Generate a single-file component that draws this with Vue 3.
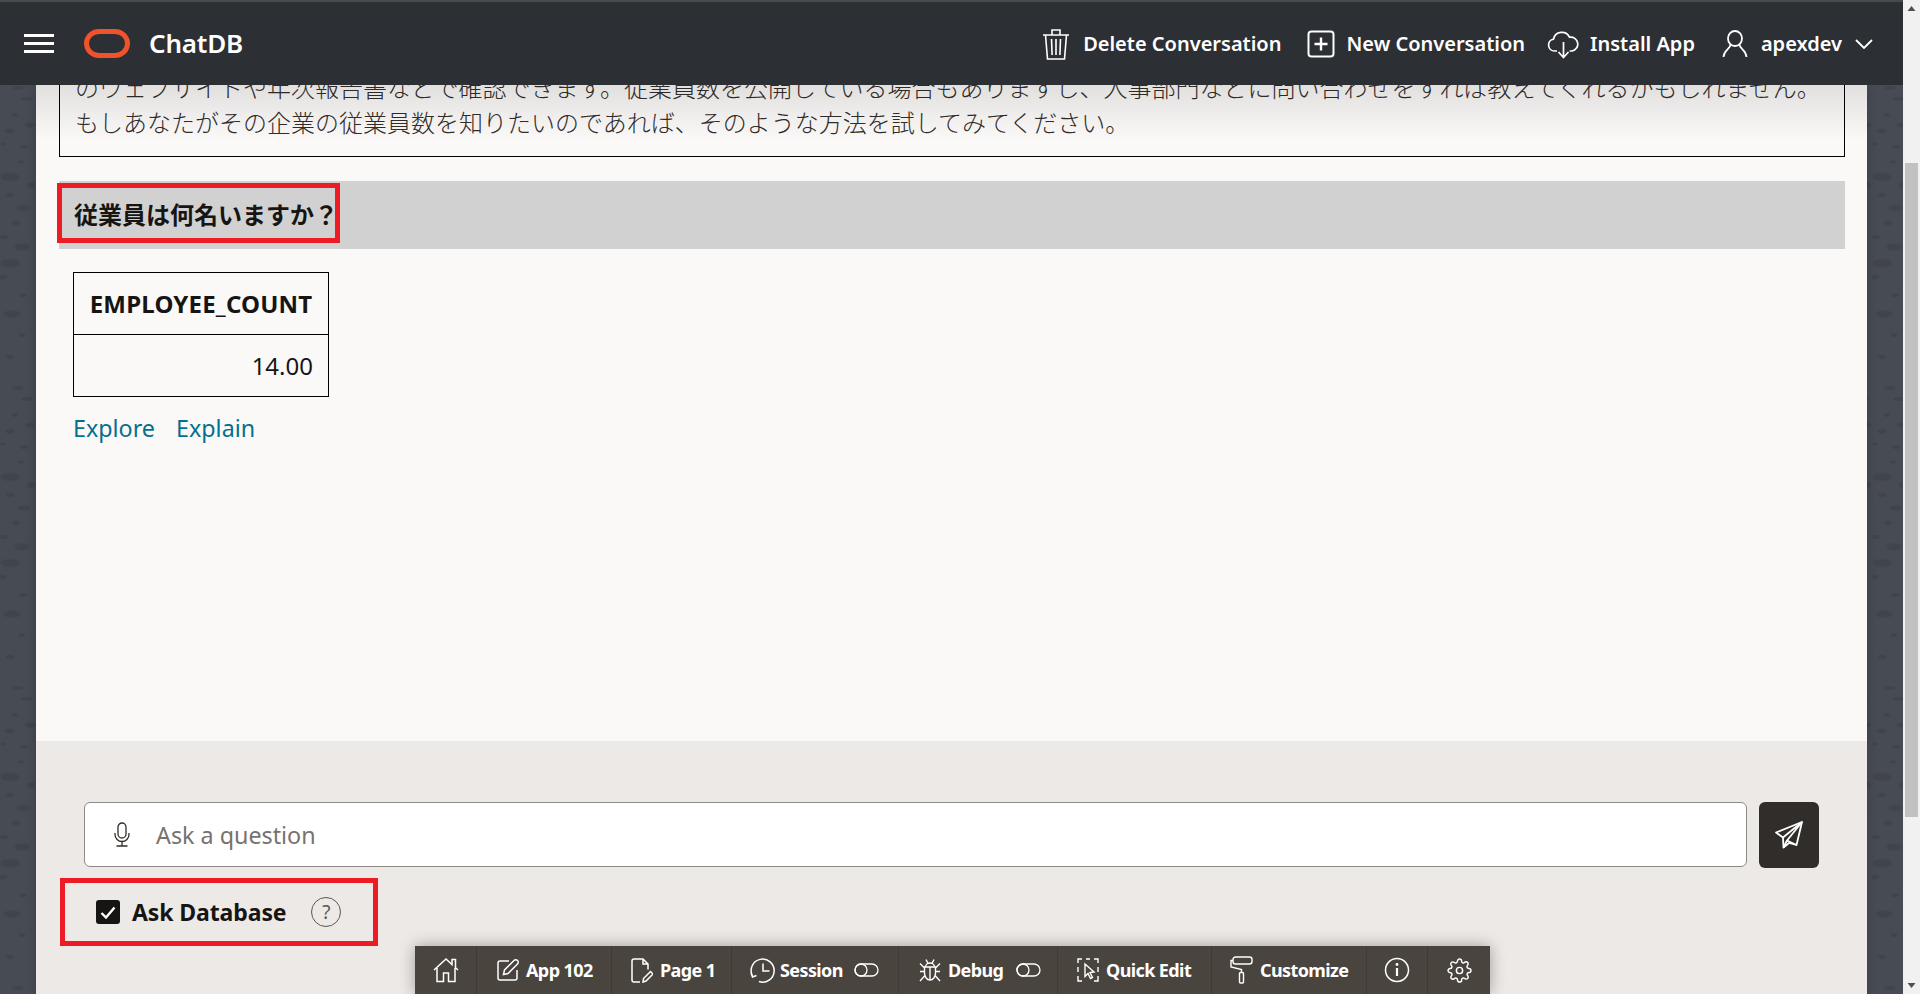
<script setup>
const lineOne = 'のウェブサイトや年次報告書などで確認できます。従業員数を公開している場合もありますし、人事部門などに問い合わせをすれば教えてくれるかもしれません。'
const lineTwo = 'もしあなたがその企業の従業員数を知りたいのであれば、そのような方法を試してみてください。'
</script>

<template>
  <div class="page">
    <div class="stage">
      <header class="topbar">
        <div class="burger"><span></span><span></span><span></span></div>
        <span class="logo"></span>
        <span class="brand">ChatDB</span>
        <nav class="actions">
          <a class="action trash">
            <svg width="28" height="32" viewBox="0 0 28 32" fill="none" stroke="#fff" stroke-width="1.6"><path d="M1 7h26M10 7V2h8v5M3.500 7l2 24h17l2-24M9.500 11l.6 16M14 11v16M18.500 11l-.6 16"/></svg>
            <span>Delete Conversation</span>
          </a>
          <a class="action new">
            <svg width="28" height="28" viewBox="0 0 28 28" fill="none" stroke="#fff" stroke-width="2"><rect x="1.500" y="1.500" width="25" height="25" rx="3"/><path d="M14 7.500v13M7.500 14h13" stroke-width="2.400"/></svg>
            <span>New Conversation</span>
          </a>
          <a class="action cloud">
            <svg width="32" height="30" viewBox="0 0 32 30" fill="none" stroke="#fff" stroke-width="1.700"><path d="M10 22H7.500A6 6 0 0 1 6.500 10.100 8.500 8.500 0 0 1 22.500 8.200 7 7 0 0 1 25 22h-2.500"/><path d="M16.500 13v15M11.500 23l5 5.500 5-5.500"/></svg>
            <span>Install App</span>
          </a>
          <a class="action user">
            <svg width="26" height="28" viewBox="0 0 26 28" fill="none" stroke="#fff" stroke-width="1.800"><ellipse cx="13" cy="8.500" rx="7" ry="7.500"/><path d="M8.500 14.500C8.500 19 2 19.500 1.500 27M17.500 14.500C17.500 19 24 19.500 24.500 27"/></svg>
            <span>apexdev</span>
            <svg class="chev" width="18" height="10" viewBox="0 0 18 10" fill="none" stroke="#fff" stroke-width="1.800"><path d="M1 1l8 8 8-8"/></svg>
          </a>
        </nav>
      </header>

      <main class="sheet">
        <section class="conversation">
          <div class="answer">
            <p>{{ lineOne }}</p>
            <p>{{ lineTwo }}</p>
          </div>
          <div class="question">
            <span class="flagged-q">従業員は何名いますか？</span>
          </div>
          <table class="result">
            <thead><tr><th>EMPLOYEE_COUNT</th></tr></thead>
            <tbody><tr><td>14.00</td></tr></tbody>
          </table>
          <div class="links"><a>Explore</a><a>Explain</a></div>
        </section>

        <section class="composer">
          <div class="ask-row">
            <div class="field">
              <svg width="16" height="25" viewBox="0 0 16 25" fill="none" stroke="#312d2a" stroke-width="1.300"><rect x="4" y="1" width="8" height="15" rx="4"/><path d="M1 11v1.500a7 7 0 0 0 14 0V11M8 19.500V24M2.500 24h11"/></svg>
              <span class="placeholder">Ask a question</span>
            </div>
            <button class="send" type="button">
              <svg width="28" height="28" viewBox="0 0 28 28" fill="none" stroke="#fff" stroke-width="1.800" stroke-linejoin="round"><path d="M27 1L1 11.500l7 5 .5 10 5.500-4.500 7.500 2z"/><path d="M27 1L8 16.500M27 1L12 19.500l-3.500 7M12 19.500l9.500 4.500"/></svg>
            </button>
          </div>
          <label class="flagged-ask">
            <span class="check">
              <svg width="16" height="13" viewBox="0 0 16 13" fill="none" stroke="#fff" stroke-width="2.400"><path d="M1.500 7l4.500 4.500L14.500 1.500"/></svg>
            </span>
            <span class="ask-label">Ask Database</span>
            <span class="help">?</span>
          </label>
        </section>
      </main>

      <div class="devbar">
        <a class="dev home">
          <svg width="26" height="26" viewBox="0 0 26 26" fill="none" stroke="#fff" stroke-width="1.500"><path d="M1 13L13 2l6 5.500V2.500h3.500v8.200L25 13M4 11v13.500h6.500V16h5v8.500H22V11"/></svg>
        </a>
        <a class="dev app">
          <svg width="22" height="22" viewBox="0 0 22 22" fill="none" stroke="#fff" stroke-width="1.500"><path d="M12 2H3a2 2 0 0 0-2 2v15a2 2 0 0 0 2 2h15a2 2 0 0 0 2-2v-8"/><path d="M6.500 15.500l1-4.500L17 1.500a2 2 0 0 1 3.500 3.500L11 14.500z"/></svg>
          <span>App 102</span>
        </a>
        <a class="dev pg">
          <svg width="22" height="25" viewBox="0 0 22 25" fill="none" stroke="#fff" stroke-width="1.500"><path d="M9 24H3a2 2 0 0 1-2-2V3a2 2 0 0 1 2-2h9l5 5v5.500M12 1v5h5"/><path d="M12 24l.5-3.500 7-7 2.500 2.500-7 7z"/></svg>
          <span>Page 1</span>
        </a>
        <a class="dev session">
          <svg width="25" height="25" viewBox="0 0 25 25" fill="none" stroke="#fff" stroke-width="1.500"><path d="M2.500 18A11.500 11.500 0 1 1 9 23.500M13 5.500V13h6.500M1 15l1.500 4 4-1.500"/></svg>
          <span>Session</span>
          <svg class="toggle" width="25" height="14" viewBox="0 0 25 14" fill="none" stroke="#fff" stroke-width="1.300"><rect x="1" y="1" width="23" height="12" rx="6"/><circle cx="7" cy="7" r="6"/></svg>
        </a>
        <a class="dev debug">
          <svg width="22" height="24" viewBox="0 0 22 24" fill="none" stroke="#fff" stroke-width="1.400"><path d="M7 1.500l2 4M15 1.500l-2 4M6.500 9a4.500 4 0 0 1 9 0M5.500 9h11v6a5.500 7 0 0 1-11 0zM11 9v13M1 5.500L5.500 10M21 5.500L16.500 10M1 13.500h4.500M21 13.500h-4.500M1 23l4.500-5M21 23l-4.500-5"/></svg>
          <span>Debug</span>
          <svg class="toggle" width="25" height="14" viewBox="0 0 25 14" fill="none" stroke="#fff" stroke-width="1.300"><rect x="1" y="1" width="23" height="12" rx="6"/><circle cx="7" cy="7" r="6"/></svg>
        </a>
        <a class="dev quick">
          <svg width="22" height="24" viewBox="0 0 22 24" fill="none" stroke="#fff" stroke-width="1.400"><path d="M1 5V1h4M9 1h4M17 1h4v4M1 9v5M21 9v5M1 18v5h4M17 23h4v-5"/><path d="M8 6l9 8-4 .5 2.500 5-2 1L11 15.500 8 18.500z"/></svg>
          <span>Quick Edit</span>
        </a>
        <a class="dev custom">
          <svg width="23" height="28" viewBox="0 0 23 28" fill="none" stroke="#fff" stroke-width="1.400"><rect x="3" y="1" width="19" height="7" rx="2.500"/><path d="M3 4.500H1v6.500l10.500 2.500v3"/><rect x="9.500" y="16.500" width="4" height="10.500" rx="1"/></svg>
          <span>Customize</span>
        </a>
        <a class="dev info">
          <svg width="26" height="26" viewBox="0 0 26 26" fill="none" stroke="#fff" stroke-width="1.500"><circle cx="13" cy="13" r="11.500"/><path d="M13 11v8" stroke-width="2.200"/><circle cx="13" cy="7.500" r="1.400" fill="#fff" stroke="none"/></svg>
        </a>
        <a class="dev gear">
          <svg width="25" height="25" viewBox="0 0 24 24" fill="none" stroke="#fff" stroke-width="1.400"><path d="M12 15a3 3 0 1 0 0-6 3 3 0 0 0 0 6z"/><path d="M19.400 15a1.650 1.650 0 0 0 .33 1.820l.06.06a2 2 0 0 1 0 2.830 2 2 0 0 1-2.830 0l-.06-.06a1.650 1.650 0 0 0-1.820-.33 1.650 1.650 0 0 0-1 1.510V21a2 2 0 0 1-2 2 2 2 0 0 1-2-2v-.09A1.650 1.650 0 0 0 9 19.400a1.650 1.650 0 0 0-1.820.33l-.06.06a2 2 0 0 1-2.830 0 2 2 0 0 1 0-2.830l.06-.06a1.650 1.650 0 0 0 .33-1.820 1.650 1.650 0 0 0-1.510-1H3a2 2 0 0 1-2-2 2 2 0 0 1 2-2h.09A1.650 1.650 0 0 0 4.600 9a1.650 1.650 0 0 0-.33-1.820l-.06-.06a2 2 0 0 1 0-2.830 2 2 0 0 1 2.830 0l.06.06a1.650 1.650 0 0 0 1.820.33H9a1.650 1.650 0 0 0 1-1.510V3a2 2 0 0 1 2-2 2 2 0 0 1 2 2v.09a1.650 1.650 0 0 0 1 1.510 1.650 1.650 0 0 0 1.820-.33l.06-.06a2 2 0 0 1 2.830 0 2 2 0 0 1 0 2.830l-.06.06a1.650 1.650 0 0 0-.33 1.820V9a1.650 1.650 0 0 0 1.510 1H21a2 2 0 0 1 2 2 2 2 0 0 1-2 2h-.09a1.650 1.650 0 0 0-1.510 1z"/></svg>
        </a>
      </div>
    </div>

    <aside class="scrollbar">
      <svg class="arrow" width="17" height="17" viewBox="0 0 17 17"><path d="M8.500 6L4.500 11h8z" fill="#505050"/></svg>
      <div class="track"><div class="thumb"></div></div>
      <svg class="arrow" width="17" height="17" viewBox="0 0 17 17"><path d="M8.500 11L4.500 6h8z" fill="#505050"/></svg>
    </aside>
  </div>
</template>

<style>
html, body { margin: 0; height: 100%; overflow: hidden; }
</style>

<style scoped>
.page {
  display: grid;
  grid-template-columns: 1fr 17px;
  height: 100vh;
  font-family: "Noto Sans", "Noto Sans CJK JP", sans-serif;
  color: #161513;
}
.stage {
  position: relative;
  display: flex;
  flex-direction: column;
  min-width: 0;
  overflow: hidden;
  background-color: #474b53;
  background-image:
    radial-gradient(ellipse 7px 2.500px at 18px 3px, #40444b 60%, transparent),
    radial-gradient(ellipse 7px 2.500px at 27px 14px, #40444b 60%, transparent),
    radial-gradient(ellipse 4px 2.500px at 15px 30px, #40444b 60%, transparent),
    radial-gradient(ellipse 6px 3px at 30px 40px, #40444b 60%, transparent),
    radial-gradient(ellipse 6px 3px at 10px 46px, #40444b 60%, transparent),
    radial-gradient(ellipse 3px 2px at 3px 59px, #40444b 60%, transparent),
    radial-gradient(ellipse 5px 2.500px at 24px 62px, #40444b 60%, transparent),
    radial-gradient(ellipse 4px 2px at 21px 77px, #40444b 60%, transparent),
    radial-gradient(ellipse 11px 5px at 10px 92px, #40444b 65%, transparent),
    radial-gradient(ellipse 5px 3.500px at 31px 100px, #40444b 60%, transparent),
    radial-gradient(ellipse 5px 2.500px at 10px 110px, #40444b 60%, transparent),
    radial-gradient(ellipse 8px 3.500px at 24px 123px, #40444b 60%, transparent),
    radial-gradient(ellipse 5px 3px at 16px 138px, #40444b 60%, transparent),
    radial-gradient(ellipse 5px 2.500px at 4px 152px, #40444b 60%, transparent),
    radial-gradient(ellipse 9px 4.500px at 22px 162px, #40444b 65%, transparent),
    radial-gradient(ellipse 11px 5px at 10px 178px, #40444b 65%, transparent),
    radial-gradient(ellipse 5px 3px at 3px 192px, #40444b 60%, transparent),
    radial-gradient(ellipse 5px 2.500px at 23px 210px, #40444b 60%, transparent),
    radial-gradient(ellipse 10px 4.500px at 12px 229px, #40444b 65%, transparent),
    radial-gradient(ellipse 4px 2.500px at 22px 250px, #40444b 60%, transparent),
    radial-gradient(ellipse 5px 2.500px at 10px 272px, #40444b 60%, transparent);
  background-size: 36px 300px;
  background-position: 0 85px;
}

.topbar {
  display: flex;
  align-items: center;
  flex: none;
  height: 83px;
  border-top: 2px solid #4a4a4a;
  background: #2c2f34;
  color: #fff;
  padding-left: 24px;
  position: relative;
  z-index: 2;
}
.burger { display: flex; flex-direction: column; gap: 5px; width: 30px; margin-top: -1px; }
.burger span { height: 3px; background: #fff; }
.logo {
  width: 46px;
  height: 29px;
  margin-left: 30px;
  box-sizing: border-box;
  border: 5px solid #f0522c;
  border-radius: 15px / 14.500px;
}
.brand { margin-left: 19px; margin-top: -2px; font-size: 26px; font-weight: 600; letter-spacing: -0.2px; }
.actions { display: flex; align-items: center; margin-left: auto; margin-right: 30px; }
.action { display: flex; align-items: center; gap: 13px; font-size: 20px; font-weight: 600; letter-spacing: 0; }
.new { margin-left: 26px; gap: 11px; }
.cloud { margin-left: 22px; gap: 11px; }
.user { margin-left: 27px; }

.sheet {
  flex: 1;
  min-height: 0;
  display: flex;
  flex-direction: column;
  margin: 0 36px;
  box-shadow: 0 0 10px #00000030;
}
.conversation {
  position: relative;
  flex: 1;
  min-height: 0;
  overflow: hidden;
  background: #fbf9f8;
  padding: 0 22px 0 23px;
}
.conversation::before {
  content: "";
  position: absolute;
  inset: 0 0 auto 0;
  height: 55px;
  background: linear-gradient(#0000001a, #00000000);
  pointer-events: none;
}
.answer {
  margin-top: -27px;
  border: 1px solid #000;
  padding: 10px 15px 17px;
  font-family: "Noto Sans CJK JP", sans-serif;
  font-size: 24px;
  font-weight: 300;
  line-height: 35px;
  color: #312d2a;
}
.answer p { margin: 0; white-space: nowrap; }
.question {
  display: flex;
  align-items: flex-start;
  height: 68px;
  margin-top: 24px;
  background: #d1d1d1;
}
.flagged-q {
  display: flex;
  align-items: center;
  box-sizing: border-box;
  height: 60px;
  margin: 2px 0 0 -2px;
  padding: 0 0 0 12px;
  width: 283px;
  border: 5px solid #ed1c24;
  font-family: "Noto Sans CJK JP", sans-serif;
  font-size: 24px;
  font-weight: 700;
  white-space: nowrap;
}
.result {
  margin: 23px 0 0 14px;
  border-collapse: collapse;
  font-size: 24px;
}
.result th, .result td {
  border: 1px solid #000;
  height: 62px;
  width: 255px;
  box-sizing: border-box;
  padding: 0 15px;
  text-align: right;
}
.result th { font-weight: 700; text-align: center; white-space: nowrap; letter-spacing: 0.2px; }
.result td { font-weight: 400; }
.links { display: flex; gap: 21px; margin: 15px 0 0 14px; font-size: 23.300px; color: #04708f; }

.composer {
  flex: none;
  box-sizing: border-box;
  height: 253px;
  background: #ede9e6;
  padding: 61px 48px 0;
  position: relative;
}
.ask-row { display: flex; gap: 12px; }
.field {
  flex: 1;
  display: flex;
  align-items: center;
  gap: 26px;
  height: 65px;
  padding-left: 29px;
  box-sizing: border-box;
  border: 1px solid #8d8b88;
  border-radius: 6px;
  background: #fff;
}
.placeholder { font-size: 23.300px; color: #77726e; }
.send {
  display: flex;
  align-items: center;
  justify-content: center;
  width: 60px;
  height: 66px;
  padding: 0;
  border: 0;
  border-radius: 6px;
  background: #312d2a;
}
.flagged-ask {
  display: flex;
  align-items: center;
  box-sizing: border-box;
  width: 318px;
  height: 68px;
  margin: 10px 0 0 -24px;
  padding-left: 31px;
  border: 5px solid #ed1c24;
}
.check {
  display: flex;
  align-items: center;
  justify-content: center;
  width: 24px;
  height: 24px;
  border-radius: 3px;
  background: #161513;
}
.ask-label { margin-left: 12px; font-size: 23px; font-weight: 700; letter-spacing: -0.1px; }
.help {
  display: flex;
  align-items: center;
  justify-content: center;
  width: 30px;
  height: 30px;
  margin-left: 25px;
  box-sizing: border-box;
  border: 1.500px solid #5c5855;
  border-radius: 50%;
  color: #5c5855;
  font-size: 19px;
}

.devbar {
  position: absolute;
  left: 415px;
  bottom: 0;
  display: flex;
  height: 48px;
  background: #4a443f;
  color: #fff;
  font-size: 18px;
  font-weight: 700;
  letter-spacing: -0.6px;
  box-shadow: 0 0 16px #00000055;
  z-index: 3;
}
.dev {
  display: flex;
  align-items: center;
  box-sizing: border-box;
  border-right: 1px solid #3f3a35;
  gap: 7px;
  padding-left: 20px;
  white-space: nowrap;
}
.home { width: 62px; padding-left: 18px; }
.app { width: 135px; }
.pg { width: 120px; padding-left: 19px; }
.session { width: 167px; padding-left: 18px; gap: 5px; }
.debug { width: 159px; padding-left: 20px; }
.quick { width: 154px; padding-left: 19px; }
.custom { width: 155px; padding-left: 18px; }
.info { width: 61px; padding-left: 17px; }
.gear { width: 62px; padding-left: 19px; border-right: 0; }
.toggle { margin-left: 6px; }

.scrollbar { display: flex; flex-direction: column; background: #f1f1f1; }
.arrow { flex: none; }
.track { flex: 1; padding: 146px 2px 160px; display: flex; }
.thumb { flex: 1; background: #c1c1c1; }
</style>
